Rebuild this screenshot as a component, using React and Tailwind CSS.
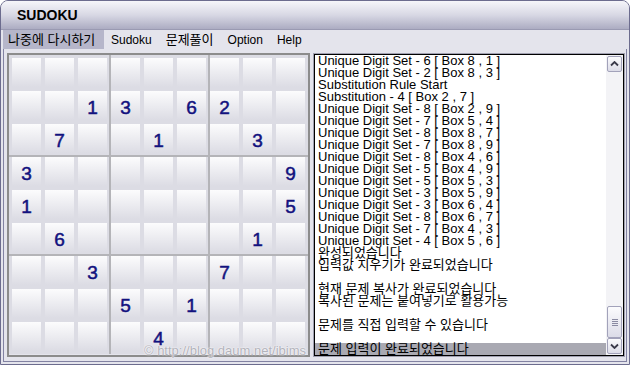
const FONT = "font-['Liberation_Sans','Noto_Sans_CJK_KR',sans-serif]"

const BOARD = [
  '.........',
  '..13.62..',
  '.7..1..3.',
  '3.......9',
  '1.......5',
  '.6.....1.',
  '..3...7..',
  '...5.1...',
  '....4....',
]

const MENU = [
  { t: 'Sudoku' },
  { t: '문제풀이', ko: true },
  { t: 'Option' },
  { t: 'Help' },
]

const LOG = [
  { t: 'Unique Digit Set - 6 [ Box 8 , 1 ]' },
  { t: 'Unique Digit Set - 2 [ Box 8 , 3 ]' },
  { t: 'Substitution Rule Start' },
  { t: 'Substitution - 4 [ Box 2 , 7 ]' },
  { t: 'Unique Digit Set - 8 [ Box 2 , 9 ]' },
  { t: 'Unique Digit Set - 7 [ Box 5 , 4 ]' },
  { t: 'Unique Digit Set - 8 [ Box 8 , 7 ]' },
  { t: 'Unique Digit Set - 7 [ Box 8 , 9 ]' },
  { t: 'Unique Digit Set - 8 [ Box 4 , 6 ]' },
  { t: 'Unique Digit Set - 5 [ Box 4 , 9 ]' },
  { t: 'Unique Digit Set - 5 [ Box 5 , 3 ]' },
  { t: 'Unique Digit Set - 3 [ Box 5 , 9 ]' },
  { t: 'Unique Digit Set - 3 [ Box 6 , 4 ]' },
  { t: 'Unique Digit Set - 8 [ Box 6 , 7 ]' },
  { t: 'Unique Digit Set - 7 [ Box 4 , 3 ]' },
  { t: 'Unique Digit Set - 4 [ Box 5 , 6 ]' },
  { t: '완성되었습니다', ko: true },
  { t: '입력값 지우기가 완료되었습니다', ko: true },
  { t: '' },
  { t: '현재 문제 복사가 완료되었습니다', ko: true },
  { t: '복사된 문제는 붙여넣기로 활용가능', ko: true },
  { t: '' },
  { t: '문제를 직접 입력할 수 있습니다', ko: true },
  { t: '' },
  { t: '문제 입력이 완료되었습니다', ko: true, sel: true },
]

function Chevron({ down }) {
  return (
    <svg width="9" height="6" viewBox="0 0 9 6">
      <polyline
        points={down ? '1,1.5 4.5,5 8,1.5' : '1,4.5 4.5,1 8,4.5'}
        fill="none"
        stroke="#3a3a4a"
        strokeWidth="1.8"
      />
    </svg>
  )
}

/** One 3x3 box; edge boxes carry the panel's inner padding so the dividers reach the frame. */
function Box({ br, bc }) {
  const pl = bc === 0 ? 'pl-[3px]' : 'pl-0'
  const pr = bc === 2 ? 'pr-[3px]' : 'pr-[2px]'
  const pt = br === 0 ? 'pt-[3px]' : 'pt-0'
  const pb = br === 2 ? 'pb-[3px]' : 'pb-[2px]'
  const cells = []
  for (let r = 0; r < 3; r++) {
    for (let c = 0; c < 3; c++) {
      const v = BOARD[br * 3 + r][bc * 3 + c]
      cells.push(
        <div
          key={`${r}-${c}`}
          className="flex h-[29px] w-[29px] items-center justify-center bg-gradient-to-b from-[#fcfcfd] to-[#dcdce4] pt-[3px] text-[19px] leading-none text-[#12127e] [-webkit-text-stroke:0.5px_#12127e]"
        >
          {v === '.' ? '' : v}
        </div>
      )
    }
  }
  return (
    <div className={`bg-[#dcdce4] ${pl} ${pr} ${pt} ${pb}`}>
      <div className="grid grid-cols-3 gap-[4px]">{cells}</div>
    </div>
  )
}

function Board() {
  const boxes = []
  for (let br = 0; br < 3; br++) {
    for (let bc = 0; bc < 3; bc++) {
      boxes.push(<Box key={`${br}-${bc}`} br={br} bc={bc} />)
    }
  }
  return (
    <div className="relative border-2 border-[#8c8c8c]">
      <div className="grid grid-cols-[100px_97px_98px] gap-[2px] bg-[#b4b4b8]">{boxes}</div>
      <span className="absolute bottom-[-2px] right-[2px] text-[13px] leading-[13px] text-[#b2b2ba] [text-shadow:0_0_2px_#fff,0_0_1px_#fff]">
        © http://blog.daum.net/ibims
      </span>
    </div>
  )
}

function ScrollBtn({ children, className = '' }) {
  return (
    <div
      className={`flex items-center justify-center rounded-[2px] border border-[#a2a2ba] bg-gradient-to-b from-[#fbfbfd] to-[#dcdce8] ${className}`}
    >
      {children}
    </div>
  )
}

function LogList() {
  return (
    <div className="flex flex-1 border border-[#a0a0b0]">
      <div className="flex flex-1 border border-black bg-white">
        <div className="flex-1 overflow-hidden">
          {LOG.map((l, i) => (
            <div
              key={i}
              className={`h-[12px] whitespace-nowrap pl-[3px] leading-[12px] text-black ${
                l.ko ? 'text-[13px]' : 'text-[13px]'
              } ${l.sel ? 'bg-[#a9a9b2]' : ''}`}
            >
              {l.t}
            </div>
          ))}
        </div>
        <div className="flex w-[17px] flex-col bg-[#f3f3f6] p-[1px]">
          <ScrollBtn className="h-[16px]">
            <Chevron />
          </ScrollBtn>
          <div className="flex flex-1 flex-col justify-end">
            <ScrollBtn className="h-[32px] flex-col gap-[1px]">
              <span className="h-px w-[6px] bg-[#8a8aa2]" />
              <span className="h-px w-[6px] bg-[#8a8aa2]" />
              <span className="h-px w-[6px] bg-[#8a8aa2]" />
              <span className="h-px w-[6px] bg-[#8a8aa2]" />
            </ScrollBtn>
          </div>
          <ScrollBtn className="h-[16px]">
            <Chevron down />
          </ScrollBtn>
        </div>
      </div>
    </div>
  )
}

export default function App() {
  return (
    <div className={`h-[365px] w-[630px] overflow-hidden bg-white ${FONT}`}>
      <div className="flex h-full flex-col rounded-t-[8px] border border-[#6c6c8e] bg-[#e4e4ec]">
        {/* title bar */}
        <div className="flex h-[29px] items-center rounded-t-[7px] border-b border-[#9a9ab2] bg-gradient-to-b from-[#f6f6fa] via-[#d8d8e4] to-[#acacc2] pl-[16px] text-[14px] font-bold text-black">
          SUDOKU
        </div>

        {/* menu */}
        <div className="flex h-[19px] items-stretch pl-[2px] text-[12px] text-black">
          <div className="flex w-[101px] items-center bg-[#b6b6ca] pl-[5px] text-[13px]">나중에 다시하기</div>
          {MENU.map((m) => (
            <div key={m.t} className={`flex items-center px-[7px] ${m.ko ? 'text-[13px]' : 'text-[12px]'}`}>
              {m.t}
            </div>
          ))}
        </div>

        {/* body frame */}
        <div className="flex flex-1 px-[2px] pb-[2px]">
          <div className="flex flex-1 border-x border-b border-[#8282a2] pb-[4px] pl-[3px] pr-[1px] pt-[4px]">
            <Board />
            <div className="ml-[3px] flex flex-1">
              <LogList />
            </div>
          </div>
        </div>
      </div>
    </div>
  )
}
